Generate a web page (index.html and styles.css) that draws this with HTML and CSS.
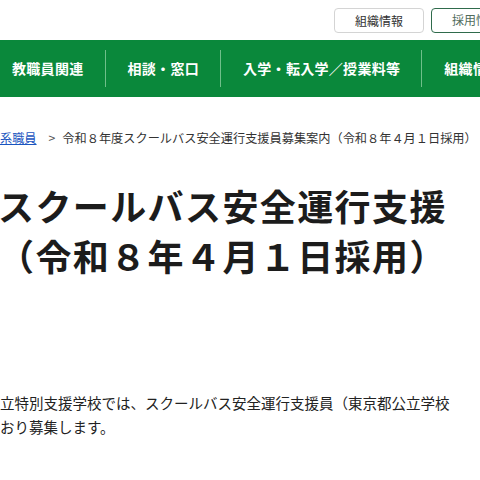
FILE: index.html
```html
<!DOCTYPE html>
<html lang="ja">
<head>
<meta charset="utf-8">
<title>令和８年度スクールバス安全運行支援員募集案内</title>
<link rel="stylesheet" href="styles.css">
</head>
<body>
<div class="page">
  <header class="topbar">
    <a class="tbtn" href="#">組織情報</a>
    <a class="tbtn tbtn-green" href="#">採用情報</a>
  </header>
  <nav class="gnav">
    <a class="gnav-item" href="#">教職員関連</a>
    <a class="gnav-item" href="#">相談・窓口</a>
    <a class="gnav-item" href="#">入学・転入学／授業料等</a>
    <a class="gnav-item" href="#">組織情報</a>
  </nav>
  <div class="crumbs">
    <a class="crumb-link" href="#">系職員</a>
    <span class="crumb-sep">&gt;</span>
    <span class="crumb-cur">令和８年度スクールバス安全運行支援員募集案内（令和８年４月１日採用）</span>
  </div>
  <h1 class="title">スクールバス安全運行支援<br>（令和８年４月１日採用）</h1>
  <p class="lead">立特別支援学校では、スクールバス安全運行支援員（東京都公立学校<br>おり募集します。</p>
</div>
</body>
</html>
```
FILE: styles.css
```css
html, body {
  margin: 0;
  padding: 0;
  background: #fff;
  overflow: hidden;
}
body {
  font-family: "Noto Sans CJK JP", "Noto Sans", sans-serif;
  color: #222;
}
.page {
  width: 480px;
  height: 480px;
  overflow: hidden;
}
a { text-decoration: none; }

.topbar {
  display: flex;
  gap: 7px;
  height: 40px;
  box-sizing: border-box;
  padding: 8px 0 0 334px;
  white-space: nowrap;
}
.tbtn {
  flex: none;
  box-sizing: border-box;
  width: 90px;
  height: 25px;
  border: 1px solid #d4d4d4;
  border-radius: 4px;
  font-size: 12px;
  line-height: 23px;
  text-align: center;
  color: #333;
  background: #fff;
}
.tbtn-green {
  border: 1.5px solid #2f6b4c;
  color: #4f6b5c;
  line-height: 22px;
}

.gnav {
  display: flex;
  height: 57px;
  background: #0a883b;
  align-items: center;
  white-space: nowrap;
}
.gnav-item {
  flex: none;
  padding: 0 21px 0 22px;
  height: 37px;
  line-height: 37px;
  color: #fff;
  font-size: 14px;
  letter-spacing: 0.3px;
  font-weight: 700;
  border-left: 1px solid #6fbf8a;
}
.gnav-item:first-child {
  border-left: none;
  padding-left: 12px;
}

.crumbs {
  margin-top: 32px;
  display: flex;
  align-items: center;
  font-size: 12.2px;
  line-height: 18px;
  white-space: nowrap;
  color: #333;
}
.crumb-link {
  color: #1a55c0;
  text-decoration: underline;
}
.crumb-sep {
  margin: 0 7px 0 12px;
  color: #555;
}

.title {
  margin: 33px 0 0 -2px;
  font-size: 36px;
  letter-spacing: 1.4px;
  line-height: 50px;
  font-weight: 700;
  color: #1c1c1c;
  white-space: nowrap;
}

.lead {
  margin: 111px 0 0 0;
  font-size: 14.5px;
  line-height: 24px;
  color: #222;
  white-space: nowrap;
}
```
